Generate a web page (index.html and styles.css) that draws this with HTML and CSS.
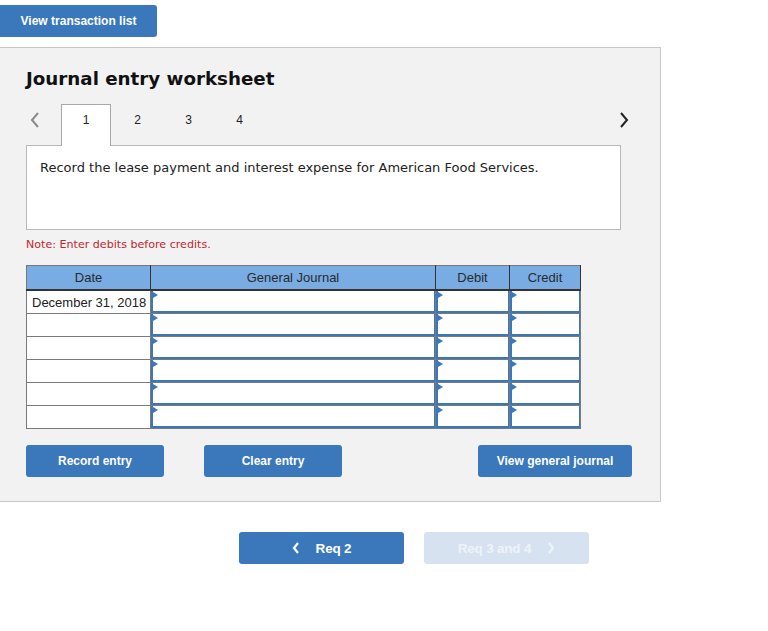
FILE: index.html
```html
<!DOCTYPE html>
<html>
<head>
<meta charset="utf-8">
<link rel="stylesheet" href="styles.css">
</head>
<body>
<div class="topbar"><button class="btn btn-top">View transaction list</button></div>
<div class="panel">
  <h1 class="title">Journal entry worksheet</h1>
  <div class="tabs">
    <span class="nav prev"><svg width="10" height="16" viewBox="0 0 10 16"><polyline points="8,1 2,8 8,15" fill="none" stroke="#8a8a8a" stroke-width="2"/></svg></span>
    <span class="tab active">1</span>
    <span class="tab">2</span>
    <span class="tab">3</span>
    <span class="tab">4</span>
    <span class="spacer"></span>
    <span class="nav next"><svg width="10" height="16" viewBox="0 0 10 16"><polyline points="2,1 8,8 2,15" fill="none" stroke="#222" stroke-width="2"/></svg></span>
  </div>
  <div class="content">Record the lease payment and interest expense for American Food Services.</div>
  <p class="note">Note: Enter debits before credits.</p>
  <table class="journal">
    <colgroup><col class="c-date"><col class="c-gj"><col class="c-dr"><col class="c-cr"></colgroup>
    <thead>
      <tr><th>Date</th><th>General Journal</th><th>Debit</th><th>Credit</th></tr>
    </thead>
    <tbody>
      <tr><td class="date">December 31, 2018</td><td class="in"><div class="field"></div></td><td class="in"><div class="field"></div></td><td class="in"><div class="field"></div></td></tr>
      <tr><td class="date"></td><td class="in"><div class="field"></div></td><td class="in"><div class="field"></div></td><td class="in"><div class="field"></div></td></tr>
      <tr><td class="date"></td><td class="in"><div class="field"></div></td><td class="in"><div class="field"></div></td><td class="in"><div class="field"></div></td></tr>
      <tr><td class="date"></td><td class="in"><div class="field"></div></td><td class="in"><div class="field"></div></td><td class="in"><div class="field"></div></td></tr>
      <tr><td class="date"></td><td class="in"><div class="field"></div></td><td class="in"><div class="field"></div></td><td class="in"><div class="field"></div></td></tr>
      <tr><td class="date"></td><td class="in"><div class="field"></div></td><td class="in"><div class="field"></div></td><td class="in"><div class="field"></div></td></tr>
    </tbody>
  </table>
  <div class="actions">
    <button class="btn btn-act">Record entry</button>
    <button class="btn btn-act">Clear entry</button>
    <span class="spacer"></span>
    <button class="btn btn-view">View general journal</button>
  </div>
</div>
<div class="reqnav">
  <button class="btn btn-req"><svg class="chev" width="8" height="12" viewBox="0 0 8 12"><polyline points="6,1 2,6 6,11" fill="none" stroke="#fff" stroke-width="2.2"/></svg>Req 2</button>
  <button class="btn btn-req disabled">Req 3 and 4<svg class="chev chev-r" width="8" height="12" viewBox="0 0 8 12"><polyline points="2,1 6,6 2,11" fill="none" stroke="#eef3f9" stroke-width="2.2"/></svg></button>
</div>
</body>
</html>
```

FILE: styles.css
```css
html, body {
  margin: 0;
  padding: 0;
  background: #fff;
  font-family: "Liberation Sans", Arial, sans-serif;
  color: #222;
}

.btn {
  border: none;
  background: #3a77bb;
  color: #fff;
  font-family: "Liberation Sans", Arial, sans-serif;
  font-weight: bold;
  font-size: 12px;
  border-radius: 3px;
  padding: 0;
  cursor: pointer;
}

.topbar {
  padding-top: 5px;
  height: 32px;
}

.btn-top {
  width: 157px;
  height: 32px;
  border-radius: 0 3px 3px 0;
}

.panel {
  margin-top: 10px;
  background: #f2f2f2;
  border-top: 1px solid #c8c8c8;
  border-right: 1px solid #c8c8c8;
  border-bottom: 1px solid #c8c8c8;
  padding: 0 0 0 26px;
  box-sizing: border-box;
  width: 661px;
  height: 455px;
}

.title {
  margin: 0;
  padding-top: 19px;
  font-family: "DejaVu Sans", Verdana, sans-serif;
  font-weight: bold;
  font-size: 18.25px;
  line-height: 24px;
  color: #111;
}

.tabs {
  display: flex;
  align-items: stretch;
  width: 595px;
  height: 41px;
  margin-top: 13px;
  position: relative;
  z-index: 1;
}

.nav {
  display: flex;
  align-items: center;
  justify-content: center;
  padding-bottom: 10px;
}

.prev {
  width: 35px;
  justify-content: flex-start;
  padding-left: 4px;
  box-sizing: border-box;
}

.next {
  width: 16px;
  justify-content: flex-start;
  margin-right: -14px;
}

.spacer {
  flex: 1;
}

.tab {
  width: 51px;
  display: flex;
  justify-content: center;
  padding-top: 9px;
  box-sizing: border-box;
  font-size: 12px;
  color: #222;
}

.tab.active {
  width: 50px;
  margin-right: 1px;
  background: #fff;
  border: 1px solid #a8a8a8;
  border-bottom: none;
  padding-top: 8px;
  height: 42px;
}

.content {
  width: 595px;
  height: 85px;
  box-sizing: border-box;
  background: #fff;
  border: 1px solid #b8b8b8;
  padding: 13px 13px;
  font-family: "DejaVu Sans", Verdana, sans-serif;
  font-size: 13px;
  line-height: 18px;
  color: #222;
}

.note {
  margin: 8px 0 0;
  font-family: "DejaVu Sans", Verdana, sans-serif;
  font-size: 11.1px;
  line-height: 14px;
  color: #c2272d;
}

.journal {
  margin-top: 13px;
  border-collapse: collapse;
  table-layout: fixed;
  border: 1px solid #777;
}

.c-date { width: 124px; }
.c-gj { width: 285px; }
.c-dr { width: 74px; }
.c-cr { width: 71px; }

.journal th {
  background: #78ace3;
  font-weight: normal;
  font-size: 13px;
  color: #2a2a2a;
  height: 23px;
  padding: 0;
  border-left: 1px solid #333;
  border-bottom: 2px solid #333;
  text-align: center;
}

.journal th:first-child { border-left: 1px solid #777; }
.journal th:last-child { border-right: 1px solid #333; }

.journal td {
  height: 22px;
  padding: 0;
  border: 1px solid #7a7a7a;
  background: #fff;
}

.journal td.date {
  font-size: 13px;
  color: #222;
  padding-left: 5px;
  white-space: nowrap;
}

.journal td.in {
  vertical-align: top;
}

.field {
  position: relative;
  height: 22px;
  box-sizing: border-box;
  border-left: 2px solid #3a77bb;
  border-bottom: 2px solid #3a77bb;
  border-right: 1px solid #3a77bb;
  background: #fff;
}

.field::before {
  content: "";
  position: absolute;
  left: 0;
  top: 1px;
  border-top: 3px solid transparent;
  border-bottom: 3px solid transparent;
  border-left: 5px solid #3a77bb;
}

.actions {
  display: flex;
  width: 606px;
  margin-top: 16px;
}

.btn-act {
  width: 138px;
  height: 32px;
  margin-right: 40px;
}

.btn-view {
  width: 154px;
  height: 32px;
}

.reqnav {
  display: flex;
  gap: 20px;
  padding-left: 239px;
  margin-top: 30px;
}

.btn-req {
  width: 165px;
  height: 32px;
  font-size: 13.5px;
  letter-spacing: -0.2px;
  display: flex;
  align-items: center;
  justify-content: center;
}

.btn-req .chev {
  margin-right: 16px;
}

.btn-req .chev-r {
  margin-right: 0;
  margin-left: 16px;
}

.btn-req.disabled {
  background: #d6e2f0;
  color: #eef3f9;
}
```
